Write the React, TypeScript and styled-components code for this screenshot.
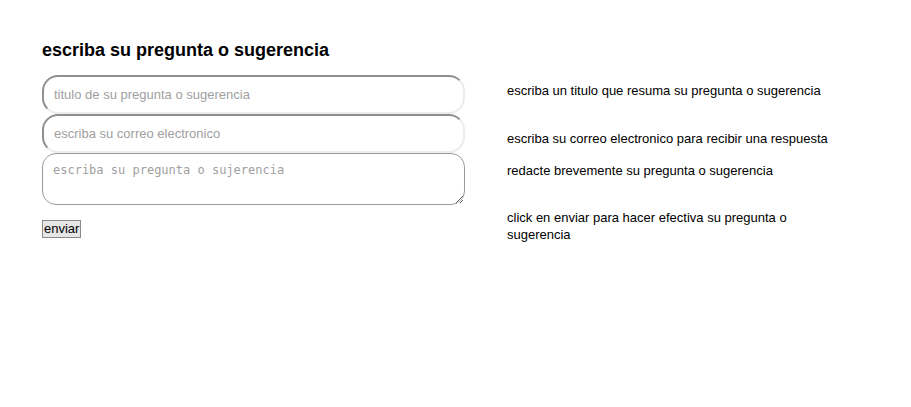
import React from "react";
import styled, { createGlobalStyle } from "styled-components";

const Global = createGlobalStyle`
  html, body { margin: 0; padding: 0; background: #fff; }
  body { font-family: "Liberation Sans", Arial, sans-serif; color: #000; }
`;

const Page = styled.div`
  padding: 39px 0 0 42px;
`;

const Title = styled.h2`
  margin: 0 0 14px 0;
  font-size: 18px;
  font-weight: bold;
  line-height: 22px;
`;

const Form = styled.div`
  display: grid;
  grid-template-columns: 423px 330px;
  column-gap: 42px;
`;

const Row = styled.div`
  display: contents;
`;

const Field = styled.div`
  display: flex;
`;

const TextInput = styled.input`
  box-sizing: border-box;
  width: 423px;
  height: 39px;
  border-width: 2px;
  border-style: solid;
  border-color: #8f8f8f #ececec #ececec #8f8f8f;
  border-radius: 16px;
  padding: 0 10px;
  font-family: "Liberation Sans", Arial, sans-serif;
  font-size: 13px;
  outline: none;
  &::placeholder { color: #a0a0a0; }
`;

const TextArea = styled.textarea`
  box-sizing: border-box;
  width: 423px;
  height: 52px;
  border: 1px solid #9a9a9a;
  border-radius: 14px;
  padding: 9px 10px;
  font-family: "DejaVu Sans Mono", "Liberation Mono", monospace;
  font-size: 12px;
  outline: none;
  &::placeholder { color: #a0a0a0; }
`;

const Button = styled.button`
  box-sizing: border-box;
  height: 18px;
  padding: 0 1px;
  margin-top: 15px;
  background: #e6e6e6;
  border: 1px solid #8a8a8a;
  border-radius: 0;
  font-family: "Liberation Sans", Arial, sans-serif;
  font-size: 13px;
  line-height: 14px;
  color: #000;
`;

const Hint = styled.p<{ $top: number }>`
  margin: 0;
  padding-top: ${(p) => p.$top}px;
  font-size: 13px;
  line-height: 17px;
`;

export default function App() {
  return (
    <>
      <Global />
      <Page>
        <Title>escriba su pregunta o sugerencia</Title>
        <Form>
          <Row>
            <Field>
              <TextInput placeholder="titulo de su pregunta o sugerencia" />
            </Field>
            <Hint $top={7}>escriba un titulo que resuma su pregunta o sugerencia</Hint>
          </Row>
          <Row>
            <Field>
              <TextInput placeholder="escriba su correo electronico" />
            </Field>
            <Hint $top={16}>escriba su correo electronico para recibir una respuesta</Hint>
          </Row>
          <Row>
            <Field>
              <TextArea placeholder="escriba su pregunta o sujerencia" />
            </Field>
            <Hint $top={9}>redacte brevemente su pregunta o sugerencia</Hint>
          </Row>
          <Row>
            <Field>
              <div>
                <Button>enviar</Button>
              </div>
            </Field>
            <Hint $top={4}>click en enviar para hacer efectiva su pregunta o sugerencia</Hint>
          </Row>
        </Form>
      </Page>
    </>
  );
}
